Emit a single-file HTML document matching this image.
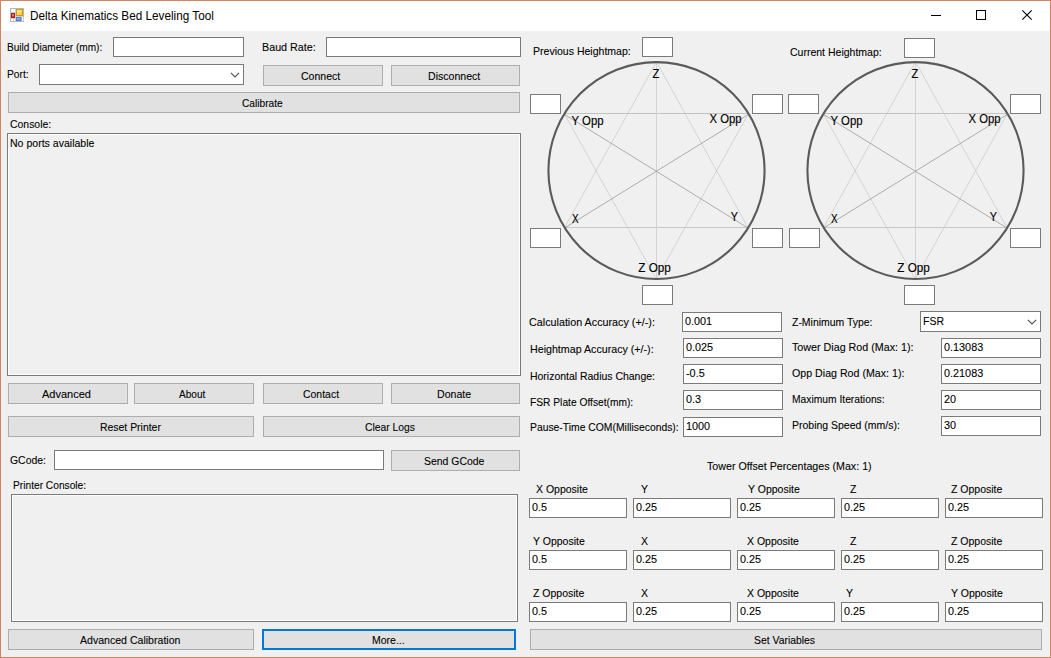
<!DOCTYPE html>
<html><head><meta charset="utf-8"><title>Delta Kinematics Bed Leveling Tool</title>
<style>
html,body{margin:0;padding:0}
body{width:1051px;height:658px;position:relative;overflow:hidden;background:#f0f0f0;font-family:"Liberation Sans", sans-serif;color:#000}
.abs{position:absolute}
#win{position:absolute;left:0;top:0;width:1049px;height:656px;border:1px solid #d08661}
#tbar{position:absolute;left:1px;top:1px;width:1049px;height:30px;background:#fff}
.tb,.btn,.ro{position:absolute;box-sizing:border-box}
.tb{background:#fff;border:1px solid #7a7a7a}
.ro{background:#f0f0f0;border:1px solid #7a7a7a;box-shadow:inset 0 0 0 1px #fff}
.btn{background:#e1e1e1;border:1px solid #adadad}
.btn.foc{border:2px solid #0078d7}
.t{position:absolute;white-space:pre;display:block;-webkit-text-stroke:0.1px #000}
.title{-webkit-text-stroke:0}
</style></head>
<body>
<div id="tbar"></div>
<div class="tb" style="left:113px;top:37px;width:131px;height:20px"></div>
<div class="tb" style="left:326px;top:37px;width:195px;height:20px"></div>
<div class="tb" style="left:39px;top:64px;width:205px;height:21px"></div>
<svg class="abs" style="left:228.5px;top:70.75px" width="12" height="8" viewBox="0 0 12 8"><path d="M1.9 1.8 L6 5.9 L10.1 1.8" fill="none" stroke="#505050" stroke-width="1.15"/></svg>
<div class="btn" style="left:263px;top:65px;width:120px;height:21px"></div>
<div class="btn" style="left:391px;top:65px;width:129px;height:21px"></div>
<div class="btn" style="left:8px;top:92px;width:512px;height:21px"></div>
<div class="ro" style="left:7px;top:133px;width:514px;height:243px"></div>
<div class="btn" style="left:8px;top:383px;width:120px;height:21px"></div>
<div class="btn" style="left:134px;top:383px;width:120px;height:21px"></div>
<div class="btn" style="left:263px;top:383px;width:120px;height:21px"></div>
<div class="btn" style="left:391px;top:383px;width:129px;height:21px"></div>
<div class="btn" style="left:8px;top:416px;width:246px;height:21px"></div>
<div class="btn" style="left:263px;top:416px;width:257px;height:21px"></div>
<div class="tb" style="left:54px;top:450px;width:330px;height:20px"></div>
<div class="btn" style="left:391px;top:450px;width:129px;height:21px"></div>
<div class="ro" style="left:11px;top:494px;width:507px;height:128px"></div>
<div class="btn" style="left:8px;top:629px;width:246px;height:21px"></div>
<div class="btn foc" style="left:262px;top:629px;width:254px;height:21px"></div>
<div class="tb" style="left:642px;top:37px;width:31px;height:20px"></div>
<div class="tb" style="left:530px;top:94px;width:31px;height:20px"></div>
<div class="tb" style="left:752px;top:94px;width:31px;height:20px"></div>
<div class="tb" style="left:530px;top:228px;width:31px;height:20px"></div>
<div class="tb" style="left:752px;top:228px;width:31px;height:20px"></div>
<div class="tb" style="left:642px;top:285px;width:31px;height:20px"></div>
<div class="tb" style="left:904px;top:38px;width:31px;height:20px"></div>
<div class="tb" style="left:788px;top:94px;width:31px;height:20px"></div>
<div class="tb" style="left:1010px;top:94px;width:31px;height:20px"></div>
<div class="tb" style="left:789px;top:228px;width:31px;height:20px"></div>
<div class="tb" style="left:1010px;top:228px;width:31px;height:20px"></div>
<div class="tb" style="left:904px;top:285px;width:31px;height:20px"></div>
<div class="tb" style="left:682px;top:312px;width:100px;height:20px"></div>
<div class="tb" style="left:683px;top:338px;width:100px;height:20px"></div>
<div class="tb" style="left:683px;top:364px;width:100px;height:20px"></div>
<div class="tb" style="left:683px;top:390px;width:100px;height:20px"></div>
<div class="tb" style="left:683px;top:417px;width:100px;height:20px"></div>
<div class="tb" style="left:920px;top:311px;width:121px;height:21px"></div>
<svg class="abs" style="left:1025.5px;top:317.75px" width="12" height="8" viewBox="0 0 12 8"><path d="M1.9 1.8 L6 5.9 L10.1 1.8" fill="none" stroke="#505050" stroke-width="1.15"/></svg>
<div class="tb" style="left:941px;top:338px;width:100px;height:20px"></div>
<div class="tb" style="left:941px;top:364px;width:100px;height:20px"></div>
<div class="tb" style="left:941px;top:390px;width:100px;height:20px"></div>
<div class="tb" style="left:941px;top:416px;width:100px;height:20px"></div>
<div class="tb" style="left:529px;top:498px;width:98px;height:20px"></div>
<div class="tb" style="left:633px;top:498px;width:98px;height:20px"></div>
<div class="tb" style="left:737px;top:498px;width:98px;height:20px"></div>
<div class="tb" style="left:841px;top:498px;width:98px;height:20px"></div>
<div class="tb" style="left:945px;top:498px;width:98px;height:20px"></div>
<div class="tb" style="left:529px;top:550px;width:98px;height:20px"></div>
<div class="tb" style="left:633px;top:550px;width:98px;height:20px"></div>
<div class="tb" style="left:737px;top:550px;width:98px;height:20px"></div>
<div class="tb" style="left:841px;top:550px;width:98px;height:20px"></div>
<div class="tb" style="left:945px;top:550px;width:98px;height:20px"></div>
<div class="tb" style="left:529px;top:602px;width:98px;height:20px"></div>
<div class="tb" style="left:633px;top:602px;width:98px;height:20px"></div>
<div class="tb" style="left:737px;top:602px;width:98px;height:20px"></div>
<div class="tb" style="left:841px;top:602px;width:98px;height:20px"></div>
<div class="tb" style="left:945px;top:602px;width:98px;height:20px"></div>
<div class="btn" style="left:530px;top:629px;width:512px;height:21px"></div>
<svg class="abs" style="left:0;top:0" width="1051" height="658" viewBox="0 0 1051 658"><line x1="656.5" y1="61.8" x2="564.9" y2="227.1" stroke="#cbcbcb" stroke-width="0.8"/><line x1="656.5" y1="61.8" x2="747.7" y2="227.1" stroke="#cbcbcb" stroke-width="0.8"/><line x1="564.3" y1="113.6" x2="656.3" y2="279.1" stroke="#cbcbcb" stroke-width="0.8"/><line x1="748.4" y1="113.7" x2="656.3" y2="279.1" stroke="#cbcbcb" stroke-width="0.8"/><line x1="564.3" y1="113.5" x2="748.4" y2="113.5" stroke="#c2c2c2" stroke-width="1"/><line x1="564.9" y1="227.5" x2="747.7" y2="227.5" stroke="#c8c8c8" stroke-width="1"/><line x1="656.5" y1="61.8" x2="656.5" y2="279.1" stroke="#d3d3d3" stroke-width="1"/><line x1="564.3" y1="114.3" x2="747.7" y2="227.8" stroke="#a4a4a4" stroke-width="0.9"/><line x1="748.4" y1="114.4" x2="564.9" y2="227.8" stroke="#a4a4a4" stroke-width="0.9"/><ellipse cx="656.50" cy="170.55" rx="108.07" ry="108.45" fill="none" stroke="#5a5a5a" stroke-width="2.1"/><text x="652.6" y="78.3" textLength="6.8" lengthAdjust="spacingAndGlyphs" font-family='"Liberation Sans", sans-serif' font-size="12.2" fill="#000" stroke="#000" stroke-width="0.15">Z</text><text x="571.6" y="125" textLength="32" lengthAdjust="spacingAndGlyphs" font-family='"Liberation Sans", sans-serif' font-size="12.2" fill="#000" stroke="#000" stroke-width="0.15">Y Opp</text><text x="709.5" y="122.8" textLength="32" lengthAdjust="spacingAndGlyphs" font-family='"Liberation Sans", sans-serif' font-size="12.2" fill="#000" stroke="#000" stroke-width="0.15">X Opp</text><text x="572.0" y="223.4" textLength="6.6" lengthAdjust="spacingAndGlyphs" font-family='"Liberation Sans", sans-serif' font-size="12.2" fill="#000" stroke="#000" stroke-width="0.15">X</text><text x="730.7" y="220.9" textLength="7.2" lengthAdjust="spacingAndGlyphs" font-family='"Liberation Sans", sans-serif' font-size="12.2" fill="#000" stroke="#000" stroke-width="0.15">Y</text><text x="638.3" y="271.7" textLength="32.6" lengthAdjust="spacingAndGlyphs" font-family='"Liberation Sans", sans-serif' font-size="12.2" fill="#000" stroke="#000" stroke-width="0.15">Z Opp</text><line x1="915.5" y1="61.8" x2="823.9" y2="227.1" stroke="#cbcbcb" stroke-width="0.8"/><line x1="915.5" y1="61.8" x2="1006.7" y2="227.1" stroke="#cbcbcb" stroke-width="0.8"/><line x1="823.3" y1="113.6" x2="915.3" y2="279.1" stroke="#cbcbcb" stroke-width="0.8"/><line x1="1007.4" y1="113.7" x2="915.3" y2="279.1" stroke="#cbcbcb" stroke-width="0.8"/><line x1="823.3" y1="113.5" x2="1007.4" y2="113.5" stroke="#c2c2c2" stroke-width="1"/><line x1="823.9" y1="227.5" x2="1006.7" y2="227.5" stroke="#c8c8c8" stroke-width="1"/><line x1="915.5" y1="61.8" x2="915.5" y2="279.1" stroke="#d3d3d3" stroke-width="1"/><line x1="823.3" y1="114.3" x2="1006.7" y2="227.8" stroke="#a4a4a4" stroke-width="0.9"/><line x1="1007.4" y1="114.4" x2="823.9" y2="227.8" stroke="#a4a4a4" stroke-width="0.9"/><ellipse cx="915.50" cy="170.55" rx="108.07" ry="108.45" fill="none" stroke="#5a5a5a" stroke-width="2.1"/><text x="911.6" y="78.3" textLength="6.8" lengthAdjust="spacingAndGlyphs" font-family='"Liberation Sans", sans-serif' font-size="12.2" fill="#000" stroke="#000" stroke-width="0.15">Z</text><text x="830.6" y="125" textLength="32" lengthAdjust="spacingAndGlyphs" font-family='"Liberation Sans", sans-serif' font-size="12.2" fill="#000" stroke="#000" stroke-width="0.15">Y Opp</text><text x="968.5" y="122.8" textLength="32" lengthAdjust="spacingAndGlyphs" font-family='"Liberation Sans", sans-serif' font-size="12.2" fill="#000" stroke="#000" stroke-width="0.15">X Opp</text><text x="831.0" y="223.4" textLength="6.6" lengthAdjust="spacingAndGlyphs" font-family='"Liberation Sans", sans-serif' font-size="12.2" fill="#000" stroke="#000" stroke-width="0.15">X</text><text x="989.7" y="220.9" textLength="7.2" lengthAdjust="spacingAndGlyphs" font-family='"Liberation Sans", sans-serif' font-size="12.2" fill="#000" stroke="#000" stroke-width="0.15">Y</text><text x="897.3" y="271.7" textLength="32.6" lengthAdjust="spacingAndGlyphs" font-family='"Liberation Sans", sans-serif' font-size="12.2" fill="#000" stroke="#000" stroke-width="0.15">Z Opp</text></svg>
<svg class="abs" style="left:0;top:0" width="1051" height="31" viewBox="0 0 1051 31">
<rect x="931" y="15" width="10" height="1" fill="#000"/>
<rect x="976.5" y="10.5" width="9" height="9" fill="none" stroke="#000" stroke-width="1"/>
<path d="M1022.3 10.3 L1031.7 19.7 M1031.7 10.3 L1022.3 19.7" stroke="#000" stroke-width="1.1" fill="none"/>
<!-- app icon -->
<defs>
<linearGradient id="gy" x1="0" y1="0" x2="1" y2="1"><stop offset="0" stop-color="#fff3a8"/><stop offset="1" stop-color="#ffc21a"/></linearGradient>
<linearGradient id="gb" x1="0" y1="0" x2="1" y2="1"><stop offset="0" stop-color="#9cc4ff"/><stop offset="1" stop-color="#4f8cf0"/></linearGradient>
</defs>
<rect x="10" y="8" width="14" height="14" fill="#b8b8b8"/>
<rect x="11" y="9" width="12" height="12" fill="#d0d0d0"/>
<rect x="11" y="9" width="4" height="3" fill="#fff"/>
<rect x="11" y="19" width="2" height="2" fill="#fff"/>
<rect x="14" y="19" width="1" height="2" fill="#fff"/>
<rect x="22" y="17" width="1.3" height="4" fill="#fff"/>
<rect x="11" y="13" width="4" height="5" fill="#a8140c"/>
<rect x="11.8" y="13.8" width="2.4" height="3.4" fill="#dc3a28"/>
<rect x="12.5" y="14" width="1" height="2" fill="#f6b0a0"/>
<rect x="16" y="9" width="7" height="7" fill="#cf9a0e"/>
<rect x="17" y="10" width="5" height="5" fill="url(#gy)"/>
<rect x="16" y="17" width="5.3" height="4" fill="#3f77d6"/>
<rect x="16.8" y="17.8" width="3.8" height="2.4" fill="url(#gb)"/>
</svg>
<span class="t " style="left:6.90px;top:39.68px;font-size:11.6px;line-height:14.6px;transform:scaleX(0.8692);transform-origin:left top">Build Diameter (mm):</span>
<span class="t " style="left:262.40px;top:39.68px;font-size:11.6px;line-height:14.6px;transform:scaleX(0.9258);transform-origin:left top">Baud Rate:</span>
<span class="t " style="left:6.90px;top:66.68px;font-size:11.6px;line-height:14.6px;transform:scaleX(0.8861);transform-origin:left top">Port:</span>
<span class="t " style="left:300.80px;top:68.68px;font-size:11.6px;line-height:14.6px;transform:scaleX(0.9076);transform-origin:left top">Connect</span>
<span class="t " style="left:428.40px;top:68.68px;font-size:11.6px;line-height:14.6px;transform:scaleX(0.9117);transform-origin:left top">Disconnect</span>
<span class="t " style="left:242.40px;top:95.68px;font-size:11.6px;line-height:14.6px;transform:scaleX(0.8760);transform-origin:left top">Calibrate</span>
<span class="t " style="left:9.90px;top:117.18px;font-size:11.6px;line-height:14.6px;transform:scaleX(0.9004);transform-origin:left top">Console:</span>
<span class="t " style="left:9.90px;top:136.18px;font-size:11.6px;line-height:14.6px;transform:scaleX(0.9096);transform-origin:left top">No ports available</span>
<span class="t " style="left:42.40px;top:386.68px;font-size:11.6px;line-height:14.6px;transform:scaleX(0.9488);transform-origin:left top">Advanced</span>
<span class="t " style="left:178.90px;top:386.68px;font-size:11.6px;line-height:14.6px;transform:scaleX(0.8688);transform-origin:left top">About</span>
<span class="t " style="left:302.90px;top:386.68px;font-size:11.6px;line-height:14.6px;transform:scaleX(0.9022);transform-origin:left top">Contact</span>
<span class="t " style="left:437.15px;top:386.68px;font-size:11.6px;line-height:14.6px;transform:scaleX(0.9137);transform-origin:left top">Donate</span>
<span class="t " style="left:99.90px;top:419.68px;font-size:11.6px;line-height:14.6px;transform:scaleX(0.8998);transform-origin:left top">Reset Printer</span>
<span class="t " style="left:365.15px;top:419.68px;font-size:11.6px;line-height:14.6px;transform:scaleX(0.8886);transform-origin:left top">Clear Logs</span>
<span class="t " style="left:10.40px;top:452.68px;font-size:11.6px;line-height:14.6px;transform:scaleX(0.8985);transform-origin:left top">GCode:</span>
<span class="t " style="left:423.90px;top:453.68px;font-size:11.6px;line-height:14.6px;transform:scaleX(0.9011);transform-origin:left top">Send GCode</span>
<span class="t " style="left:13.20px;top:477.68px;font-size:11.6px;line-height:14.6px;transform:scaleX(0.8793);transform-origin:left top">Printer Console:</span>
<span class="t " style="left:79.90px;top:632.68px;font-size:11.6px;line-height:14.6px;transform:scaleX(0.9111);transform-origin:left top">Advanced Calibration</span>
<span class="t " style="left:371.90px;top:632.68px;font-size:11.6px;line-height:14.6px;transform:scaleX(0.9064);transform-origin:left top">More...</span>
<span class="t " style="left:532.90px;top:43.68px;font-size:11.6px;line-height:14.6px;transform:scaleX(0.9079);transform-origin:left top">Previous Heightmap:</span>
<span class="t " style="left:789.90px;top:44.68px;font-size:11.6px;line-height:14.6px;transform:scaleX(0.9064);transform-origin:left top">Current Heightmap:</span>
<span class="t " style="left:528.90px;top:314.68px;font-size:11.6px;line-height:14.6px;transform:scaleX(0.9280);transform-origin:left top">Calculation Accuracy (+/-):</span>
<span class="t " style="left:529.90px;top:341.68px;font-size:11.6px;line-height:14.6px;transform:scaleX(0.9202);transform-origin:left top">Heightmap Accuracy (+/-):</span>
<span class="t " style="left:529.90px;top:368.68px;font-size:11.6px;line-height:14.6px;transform:scaleX(0.9018);transform-origin:left top">Horizontal Radius Change:</span>
<span class="t " style="left:529.90px;top:394.68px;font-size:11.6px;line-height:14.6px;transform:scaleX(0.8818);transform-origin:left top">FSR Plate Offset(mm):</span>
<span class="t " style="left:529.90px;top:420.18px;font-size:11.6px;line-height:14.6px;transform:scaleX(0.8935);transform-origin:left top">Pause-Time COM(Milliseconds):</span>
<span class="t " style="left:684.80px;top:314.48px;font-size:11.6px;line-height:14.6px;transform:scaleX(0.9350);transform-origin:left top">0.001</span>
<span class="t " style="left:685.80px;top:340.48px;font-size:11.6px;line-height:14.6px;transform:scaleX(0.9350);transform-origin:left top">0.025</span>
<span class="t " style="left:685.80px;top:366.48px;font-size:11.6px;line-height:14.6px;transform:scaleX(0.9350);transform-origin:left top">-0.5</span>
<span class="t " style="left:685.80px;top:392.48px;font-size:11.6px;line-height:14.6px;transform:scaleX(0.9350);transform-origin:left top">0.3</span>
<span class="t " style="left:685.80px;top:419.48px;font-size:11.6px;line-height:14.6px;transform:scaleX(0.9350);transform-origin:left top">1000</span>
<span class="t " style="left:792.40px;top:314.68px;font-size:11.6px;line-height:14.6px;transform:scaleX(0.9013);transform-origin:left top">Z-Minimum Type:</span>
<span class="t " style="left:791.80px;top:340.38px;font-size:11.6px;line-height:14.6px;transform:scaleX(0.9244);transform-origin:left top">Tower Diag Rod (Max: 1):</span>
<span class="t " style="left:791.80px;top:366.48px;font-size:11.6px;line-height:14.6px;transform:scaleX(0.9181);transform-origin:left top">Opp Diag Rod (Max: 1):</span>
<span class="t " style="left:792.40px;top:391.68px;font-size:11.6px;line-height:14.6px;transform:scaleX(0.8872);transform-origin:left top">Maximum Iterations:</span>
<span class="t " style="left:792.40px;top:417.98px;font-size:11.6px;line-height:14.6px;transform:scaleX(0.9043);transform-origin:left top">Probing Speed (mm/s):</span>
<span class="t " style="left:922.90px;top:313.78px;font-size:11.6px;line-height:14.6px;transform:scaleX(0.9050);transform-origin:left top">FSR</span>
<span class="t " style="left:943.80px;top:340.48px;font-size:11.6px;line-height:14.6px;transform:scaleX(0.9350);transform-origin:left top">0.13083</span>
<span class="t " style="left:943.80px;top:366.48px;font-size:11.6px;line-height:14.6px;transform:scaleX(0.9350);transform-origin:left top">0.21083</span>
<span class="t " style="left:943.80px;top:392.48px;font-size:11.6px;line-height:14.6px;transform:scaleX(0.9350);transform-origin:left top">20</span>
<span class="t " style="left:943.80px;top:418.48px;font-size:11.6px;line-height:14.6px;transform:scaleX(0.9350);transform-origin:left top">30</span>
<span class="t " style="left:706.65px;top:458.68px;font-size:11.6px;line-height:14.6px;transform:scaleX(0.9201);transform-origin:left top">Tower Offset Percentages (Max: 1)</span>
<span class="t " style="left:531.80px;top:500.48px;font-size:11.6px;line-height:14.6px;transform:scaleX(0.9350);transform-origin:left top">0.5</span>
<span class="t " style="left:536.10px;top:482.18px;font-size:11.6px;line-height:14.6px;transform:scaleX(0.9050);transform-origin:left top">X Opposite</span>
<span class="t " style="left:635.80px;top:500.48px;font-size:11.6px;line-height:14.6px;transform:scaleX(0.9350);transform-origin:left top">0.25</span>
<span class="t " style="left:641.30px;top:482.18px;font-size:11.6px;line-height:14.6px;transform:scaleX(0.9050);transform-origin:left top">Y</span>
<span class="t " style="left:739.80px;top:500.48px;font-size:11.6px;line-height:14.6px;transform:scaleX(0.9350);transform-origin:left top">0.25</span>
<span class="t " style="left:747.85px;top:482.18px;font-size:11.6px;line-height:14.6px;transform:scaleX(0.9050);transform-origin:left top">Y Opposite</span>
<span class="t " style="left:843.80px;top:500.48px;font-size:11.6px;line-height:14.6px;transform:scaleX(0.9350);transform-origin:left top">0.25</span>
<span class="t " style="left:850.10px;top:482.18px;font-size:11.6px;line-height:14.6px;transform:scaleX(0.9050);transform-origin:left top">Z</span>
<span class="t " style="left:947.80px;top:500.48px;font-size:11.6px;line-height:14.6px;transform:scaleX(0.9350);transform-origin:left top">0.25</span>
<span class="t " style="left:951.40px;top:482.18px;font-size:11.6px;line-height:14.6px;transform:scaleX(0.9050);transform-origin:left top">Z Opposite</span>
<span class="t " style="left:531.80px;top:552.48px;font-size:11.6px;line-height:14.6px;transform:scaleX(0.9350);transform-origin:left top">0.5</span>
<span class="t " style="left:533.10px;top:534.18px;font-size:11.6px;line-height:14.6px;transform:scaleX(0.9050);transform-origin:left top">Y Opposite</span>
<span class="t " style="left:635.80px;top:552.48px;font-size:11.6px;line-height:14.6px;transform:scaleX(0.9350);transform-origin:left top">0.25</span>
<span class="t " style="left:640.70px;top:534.18px;font-size:11.6px;line-height:14.6px;transform:scaleX(0.9050);transform-origin:left top">X</span>
<span class="t " style="left:739.80px;top:552.48px;font-size:11.6px;line-height:14.6px;transform:scaleX(0.9350);transform-origin:left top">0.25</span>
<span class="t " style="left:746.60px;top:534.18px;font-size:11.6px;line-height:14.6px;transform:scaleX(0.9050);transform-origin:left top">X Opposite</span>
<span class="t " style="left:843.80px;top:552.48px;font-size:11.6px;line-height:14.6px;transform:scaleX(0.9350);transform-origin:left top">0.25</span>
<span class="t " style="left:850.10px;top:534.18px;font-size:11.6px;line-height:14.6px;transform:scaleX(0.9050);transform-origin:left top">Z</span>
<span class="t " style="left:947.80px;top:552.48px;font-size:11.6px;line-height:14.6px;transform:scaleX(0.9350);transform-origin:left top">0.25</span>
<span class="t " style="left:951.40px;top:534.18px;font-size:11.6px;line-height:14.6px;transform:scaleX(0.9050);transform-origin:left top">Z Opposite</span>
<span class="t " style="left:531.80px;top:604.48px;font-size:11.6px;line-height:14.6px;transform:scaleX(0.9350);transform-origin:left top">0.5</span>
<span class="t " style="left:533.10px;top:586.18px;font-size:11.6px;line-height:14.6px;transform:scaleX(0.9050);transform-origin:left top">Z Opposite</span>
<span class="t " style="left:635.80px;top:604.48px;font-size:11.6px;line-height:14.6px;transform:scaleX(0.9350);transform-origin:left top">0.25</span>
<span class="t " style="left:640.70px;top:586.18px;font-size:11.6px;line-height:14.6px;transform:scaleX(0.9050);transform-origin:left top">X</span>
<span class="t " style="left:739.80px;top:604.48px;font-size:11.6px;line-height:14.6px;transform:scaleX(0.9350);transform-origin:left top">0.25</span>
<span class="t " style="left:746.60px;top:586.18px;font-size:11.6px;line-height:14.6px;transform:scaleX(0.9050);transform-origin:left top">X Opposite</span>
<span class="t " style="left:843.80px;top:604.48px;font-size:11.6px;line-height:14.6px;transform:scaleX(0.9350);transform-origin:left top">0.25</span>
<span class="t " style="left:845.90px;top:586.18px;font-size:11.6px;line-height:14.6px;transform:scaleX(0.9050);transform-origin:left top">Y</span>
<span class="t " style="left:947.80px;top:604.48px;font-size:11.6px;line-height:14.6px;transform:scaleX(0.9350);transform-origin:left top">0.25</span>
<span class="t " style="left:951.40px;top:586.18px;font-size:11.6px;line-height:14.6px;transform:scaleX(0.9050);transform-origin:left top">Y Opposite</span>
<span class="t " style="left:753.60px;top:632.68px;font-size:11.6px;line-height:14.6px;transform:scaleX(0.8961);transform-origin:left top">Set Variables</span>
<span class="t title" style="left:30.00px;top:9.04px;font-size:12px;line-height:15px;transform:scaleX(0.9785);transform-origin:left top">Delta Kinematics Bed Leveling Tool</span>
<div id="win"></div>
</body></html>
